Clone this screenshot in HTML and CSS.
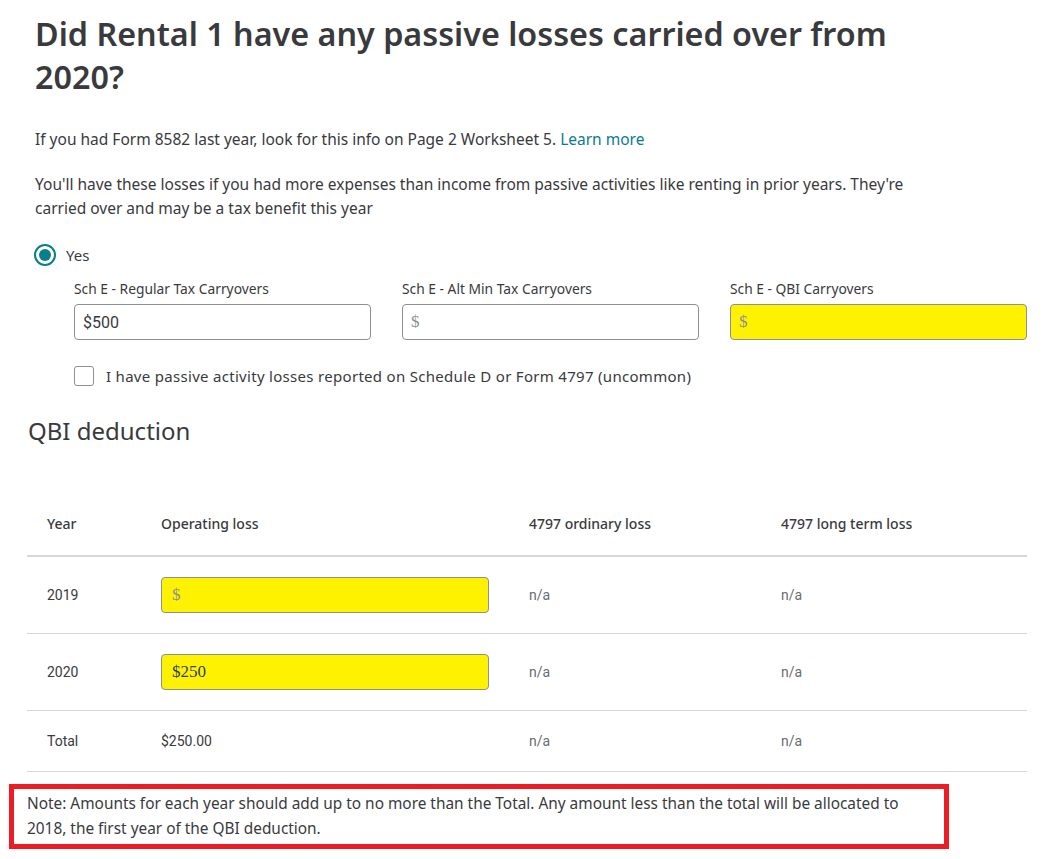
FILE: index.html
```html
<!DOCTYPE html>
<html lang="en">
<head>
  <meta charset="UTF-8">
  <title>Passive losses carryover</title>
  <meta name="viewport" content="width=device-width, initial-scale=1.0">
  <link rel="stylesheet" href="styles.css">
</head>
<body>
  <div id="page">
    <h1>Did Rental 1 have any passive losses carried over from 2020?</h1>
    <p class="info">If you had Form 8582 last year, look for this info on Page 2 Worksheet 5. <a href="#">Learn more</a></p>
    <p class="explain">You'll have these losses if you had more expenses than income from passive activities like renting in prior years. They're carried over and may be a tax benefit this year</p>

    <div class="radio-row">
      <span class="radio"><span class="dot"></span></span>
      <span class="radio-label">Yes</span>
    </div>

    <div class="yes-block">
      <div class="fields">
        <div class="field">
          <label>Sch E - Regular Tax Carryovers</label>
          <div class="input filled">$500</div>
        </div>
        <div class="field">
          <label>Sch E - Alt Min Tax Carryovers</label>
          <div class="input empty">$</div>
        </div>
        <div class="field">
          <label>Sch E - QBI Carryovers</label>
          <div class="input empty highlight">$</div>
        </div>
      </div>
      <div class="check-row">
        <span class="checkbox"></span>
        <span class="check-label">I have passive activity losses reported on Schedule D or Form 4797 (uncommon)</span>
      </div>
    </div>
  </div>

  <h2>QBI deduction</h2>

  <div class="qbi-table">
    <div class="row head">
      <div class="cell first">Year</div>
      <div class="cell">Operating loss</div>
      <div class="cell">4797 ordinary loss</div>
      <div class="cell">4797 long term loss</div>
    </div>
    <div class="row entry">
      <div class="cell first">2019</div>
      <div class="cell"><div class="input empty highlight small">$</div></div>
      <div class="cell muted">n/a</div>
      <div class="cell muted">n/a</div>
    </div>
    <div class="row entry">
      <div class="cell first">2020</div>
      <div class="cell"><div class="input highlight small typed">$250</div></div>
      <div class="cell muted">n/a</div>
      <div class="cell muted">n/a</div>
    </div>
    <div class="row total">
      <div class="cell first">Total</div>
      <div class="cell">$250.00</div>
      <div class="cell muted">n/a</div>
      <div class="cell muted">n/a</div>
    </div>
  </div>

  <div class="note">
    Note: Amounts for each year should add up to no more than the Total. Any amount less than the total will be allocated to 2018, the first year of the QBI deduction.
  </div>
</body>
</html>
```

FILE: styles.css
```css
html, body {
  margin: 0;
  padding: 0;
  background: #ffffff;
  color: #393a3d;
  font-family: 'Noto Sans', 'Open Sans', sans-serif;
}
#page {
  padding-left: 35px;
}
h1 {
  margin: 12px 0 0 0;
  font-size: 32.3px;
  line-height: 43px;
  font-weight: 600;
  max-width: 900px;
}
.info {
  margin: 29px 0 0 0;
  font-size: 15.5px;
  line-height: 24px;
}
.info a {
  color: #0b7a93;
  text-decoration: none;
}
.explain {
  margin: 21px 0 0 0;
  font-size: 15.5px;
  line-height: 24px;
  max-width: 880px;
}
.radio-row {
  display: flex;
  align-items: center;
  margin-top: 24px;
  margin-left: -1px;
}
.radio {
  width: 18px;
  height: 18px;
  border: 2px solid #0a7d8f;
  border-radius: 50%;
  display: flex;
  align-items: center;
  justify-content: center;
}
.dot {
  width: 12px;
  height: 12px;
  border-radius: 50%;
  background: #0a7d8f;
}
.radio-label {
  margin-left: 10px;
  font-size: 15px;
}
.yes-block {
  padding-left: 39px;
}
.fields {
  display: grid;
  grid-template-columns: 297px 297px 297px;
  column-gap: 31px;
  margin-top: 14px;
}
.field label {
  display: block;
  font-size: 13.8px;
  line-height: 18px;
  margin-bottom: 6px;
}
.input {
  box-sizing: border-box;
  height: 36px;
  border: 1px solid #8d9096;
  border-radius: 4px;
  padding: 0 8px;
  display: flex;
  align-items: center;
  font-family: 'Liberation Serif', serif;
  font-size: 17px;
  background: #ffffff;
}
.input.filled {
  color: #393a3d;
  font-family: 'Roboto', 'Liberation Sans', sans-serif;
  font-size: 16px;
}
.input.empty {
  color: #8d9096;
}
.input.highlight {
  background: #fff200;
}
.input.small {
  width: 328px;
  padding-left: 10px;
}
.input.typed {
  color: #2f3f66;
}
.check-row {
  display: flex;
  align-items: center;
  margin-top: 26px;
}
.checkbox {
  box-sizing: border-box;
  width: 20px;
  height: 20px;
  border: 1px solid #8d9096;
  border-radius: 3px;
}
.check-label {
  margin-left: 12px;
  font-size: 15px;
  letter-spacing: 0.3px;
}
h2 {
  margin: 29px 0 0 28px;
  font-size: 24px;
  line-height: 32px;
  font-weight: 400;
}
.qbi-table {
  margin: 45px 0 0 27px;
  width: 1000px;
}
.row {
  display: grid;
  grid-template-columns: 134px 368px 252px 246px;
  align-items: center;
  border-bottom: 1px solid #d4d7dc;
}
.row.head {
  height: 63px;
  border-bottom: 2px solid #d4d7dc;
  font-size: 14px;
  font-weight: 500;
}
.row.entry {
  height: 76px;
}
.row.total {
  height: 60px;
}
.cell {
  font-size: 14px;
}
.row.entry .cell, .row.total .cell {
  font-family: 'Roboto', 'Liberation Sans', sans-serif;
}
.cell.first {
  padding-left: 20px;
}
.cell.muted {
  color: #6b6c72;
}
.note {
  margin: 12px 0 0 9px;
  width: 940px;
  box-sizing: border-box;
  border: 5px solid #ed1c24;
  padding: 2px 13px 3px 13px;
  font-size: 15.4px;
  line-height: 25px;
}
```
